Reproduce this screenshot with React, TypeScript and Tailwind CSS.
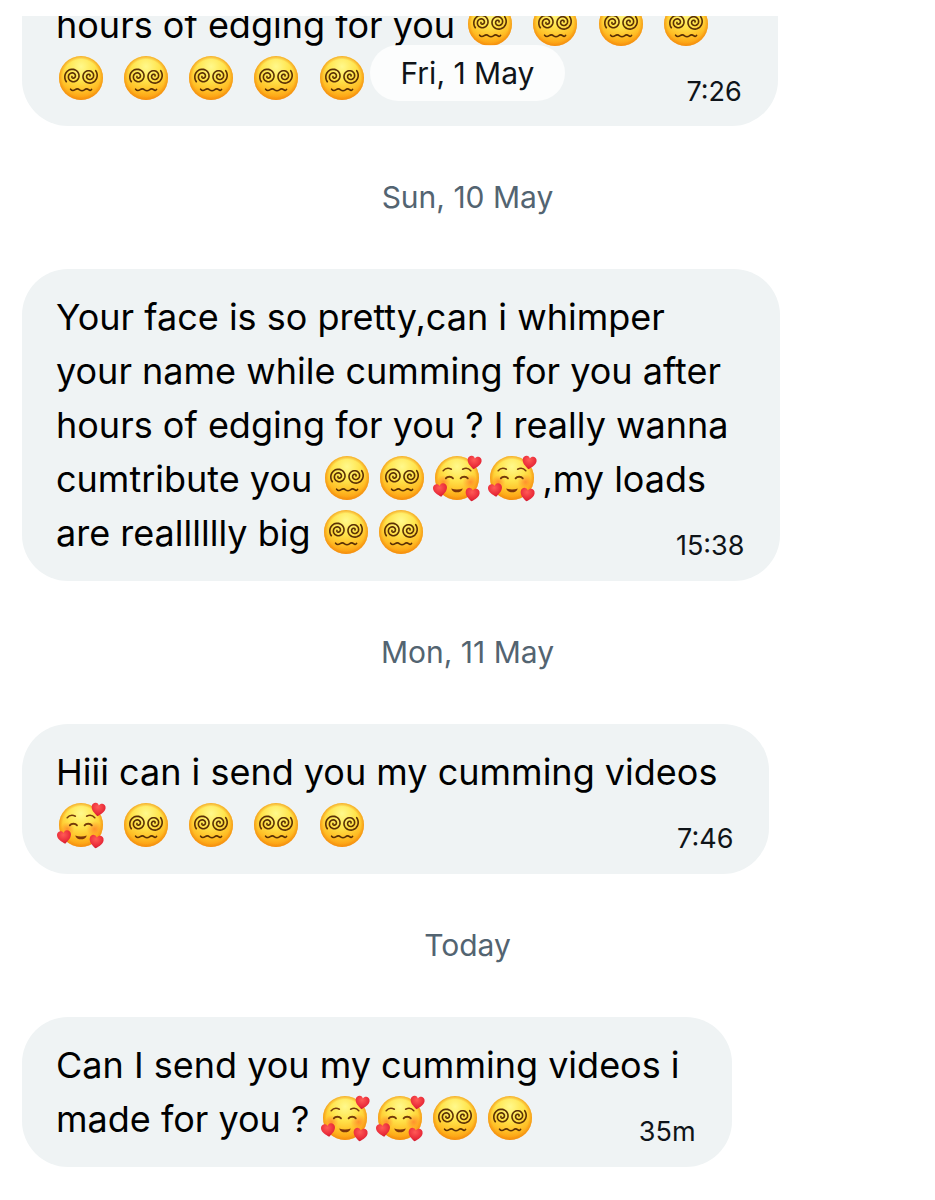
import React from 'react';

interface Message {
  lines: string[];
  time: string;
  continued?: boolean;
}

interface DaySeparatorProps {
  label: string;
}

// Archimedean spiral sampled as a polyline, centred on (cx, cy)
const spiral = (cx: number, cy: number, endAngle: number) => {
  const turns = 2.1;
  const steps = 56;
  const points: string[] = [];
  for (let i = 0; i <= steps; i++) {
    const t = i / steps;
    const angle = endAngle + (1 - t) * turns * Math.PI * 2;
    const r = 0.8 + t * 7.6;
    points.push(`${(cx + r * Math.cos(angle)).toFixed(2)} ${(cy + r * Math.sin(angle)).toFixed(2)}`);
  }
  return `M${points.join('L')}`;
};

const LEFT_EYE = spiral(-8.2, -1.6, Math.PI * 0.78);
const RIGHT_EYE = spiral(8.2, -2, -Math.PI * 0.22);
const HEART = 'M0 6.6C-3.6 4-7 1.2-7-2.4C-7-5-5.2-6.5-3.3-6.5C-1.8-6.5-.6-5.7 0-4.3C.6-5.7 1.8-6.5 3.3-6.5C5.2-6.5 7-5 7-2.4C7 1.2 3.6 4 0 6.6Z';

const EmojiDefs: React.FC = () => (
  <svg className="absolute w-0 h-0" aria-hidden="true">
    <defs>
      <radialGradient id="face" cx="50%" cy="24%" r="78%">
        <stop offset="0%" stopColor="#fff98c" />
        <stop offset="40%" stopColor="#ffe44c" />
        <stop offset="72%" stopColor="#ffbf26" />
        <stop offset="100%" stopColor="#fb920a" />
      </radialGradient>
      <radialGradient id="rim" cx="50%" cy="50%" r="50%">
        <stop offset="84%" stopColor="#f08a10" stopOpacity="0" />
        <stop offset="100%" stopColor="#f08a10" stopOpacity="0.65" />
      </radialGradient>
      <radialGradient id="blush">
        <stop offset="0%" stopColor="#ff6a28" stopOpacity="0.6" />
        <stop offset="100%" stopColor="#ff7a28" stopOpacity="0" />
      </radialGradient>
      <radialGradient id="heart" cx="45%" cy="30%" r="70%">
        <stop offset="0%" stopColor="#ff5a56" />
        <stop offset="70%" stopColor="#ea2c3a" />
        <stop offset="100%" stopColor="#cf1c30" />
      </radialGradient>
    </defs>
  </svg>
);

const Emoji: React.FC<{ label: string; children: React.ReactNode }> = ({ label, children }) => (
  <svg
    role="img"
    aria-label={label}
    viewBox="-25 -22 55 52"
    className="inline-block align-middle w-[55px] h-[52px] overflow-visible"
  >
    <circle r="22" fill="url(#face)" />
    <circle r="22" fill="url(#rim)" />
    {children}
  </svg>
);

const DizzyFace: React.FC = () => (
  <Emoji label="Face with spiral eyes">
    <g fill="none" stroke="#5a3005" strokeLinecap="round" strokeLinejoin="round">
      <path d={LEFT_EYE} strokeWidth="1.6" />
      <path d={RIGHT_EYE} strokeWidth="1.6" />
      <path d="M-10.4 11.2C-9 13-7.4 12.8-5.8 11.6C-4.2 10.4-2.8 10.6-1.4 11.8C.2 13 1.8 13 3.4 11.8C5 10.5 6.4 10.6 7.6 11.7C8.6 12.6 9.8 12.6 10.6 11.4" strokeWidth="1.6" />
    </g>
  </Emoji>
);

const LovedFace: React.FC = () => (
  <Emoji label="Smiling face with hearts">
    <circle cx="13.5" cy="4" r="8" fill="url(#blush)" />
    <circle cx="-13.5" cy="4" r="7" fill="url(#blush)" />
    <g fill="none" stroke="#743a0a" strokeLinecap="round">
      <path d="M-13.8 -7.2C-12 -9.4-8.6 -10.2-5.6 -8.8" strokeWidth="1.5" />
      <path d="M5.6 -8.8C8.6 -10.2 12 -9.4 13.8 -7.2" strokeWidth="1.5" />
      <path d="M-11.2 .4C-9.6 -1.8-5.6 -1.8-4 .4" strokeWidth="1.8" />
      <path d="M3.6 .4C5.2 -1.8 9.2 -1.8 10.8 .4" strokeWidth="1.8" />
    </g>
    <path d="M-5.8 10.4C-2.4 11.8 2.4 11.8 5.8 10.4C4.4 15.6-4.4 15.6-5.8 10.4Z" fill="#7e360a" />
    <path d={HEART} fill="url(#heart)" transform="translate(17.3 -15.3) rotate(8)" />
    <path d={HEART} fill="url(#heart)" transform="translate(-16.7 12.2) rotate(-8)" />
    <path d={HEART} fill="url(#heart)" transform="translate(15.3 16.8) rotate(8)" />
  </Emoji>
);

const EMOJI: Record<string, React.FC> = {
  ':dizzy:': DizzyFace,
  ':loved:': LovedFace,
};

const Line: React.FC<{ text: string }> = ({ text }) => (
  <span className="block h-[54px] whitespace-pre">
    {text.split(/(:dizzy:|:loved:)/).map((part, i) => {
      const Face = EMOJI[part];
      return Face ? <Face key={i} /> : part;
    })}
  </span>
);

const Bubble: React.FC<Message> = ({ lines, time, continued }) => (
  <article
    className={
      continued
        ? 'grid w-fit rounded-b-[46px] bg-[#eff3f4] pb-5 pl-[34px] pr-9 -mt-[18px]'
        : 'grid w-fit rounded-[46px] bg-[#eff3f4] py-[21px] pl-[34px] pr-9'
    }
  >
    <p className="col-start-1 row-start-1 pr-4 text-[36px] leading-[54px] text-black">
      {lines.map((line, i) => (
        <Line key={i} text={line} />
      ))}
    </p>
    <time className="col-start-1 row-start-1 self-end justify-self-end text-[27px] leading-7 text-[#0f1419]">
      {time}
    </time>
  </article>
);

const DaySeparator: React.FC<DaySeparatorProps> = ({ label }) => (
  <h2 className="py-[51px] text-center text-[30px] leading-[41px] text-[#536471]">{label}</h2>
);

const App: React.FC = () => {
  return (
    <div className="relative min-h-screen bg-white pt-4 font-['Inter',sans-serif]">
      <EmojiDefs />

      {/* Floating date pill */}
      <div className="absolute inset-x-0 top-[45px] z-10 flex justify-center">
        <span className="rounded-full bg-white/80 px-[31px] text-[30px] leading-[56px] text-[#0f1419]">
          Fri, 1 May
        </span>
      </div>

      <main className="overflow-hidden">
        <div className="px-[22px]">
          <Bubble
            continued
            lines={[
              'hours of edging for you :dizzy: :dizzy: :dizzy: :dizzy: ',
              ':dizzy: :dizzy: :dizzy: :dizzy: :dizzy:',
            ]}
            time="7:26"
          />
          <DaySeparator label="Sun, 10 May" />
          <Bubble
            lines={[
              'Your face is so pretty,can i whimper',
              'your name while cumming for you after',
              'hours of edging for you ? I really wanna',
              'cumtribute you :dizzy::dizzy::loved::loved:,my loads',
              'are realllllly big :dizzy::dizzy:',
            ]}
            time="15:38"
          />
          <DaySeparator label="Mon, 11 May" />
          <Bubble
            lines={[
              'Hiii can i send you my cumming videos',
              ':loved: :dizzy: :dizzy: :dizzy: :dizzy:',
            ]}
            time="7:46"
          />
          <DaySeparator label="Today" />
          <Bubble
            lines={[
              'Can I send you my cumming videos i',
              'made for you ? :loved::loved::dizzy::dizzy:',
            ]}
            time="35m"
          />
        </div>
      </main>
    </div>
  );
};

export default App;
